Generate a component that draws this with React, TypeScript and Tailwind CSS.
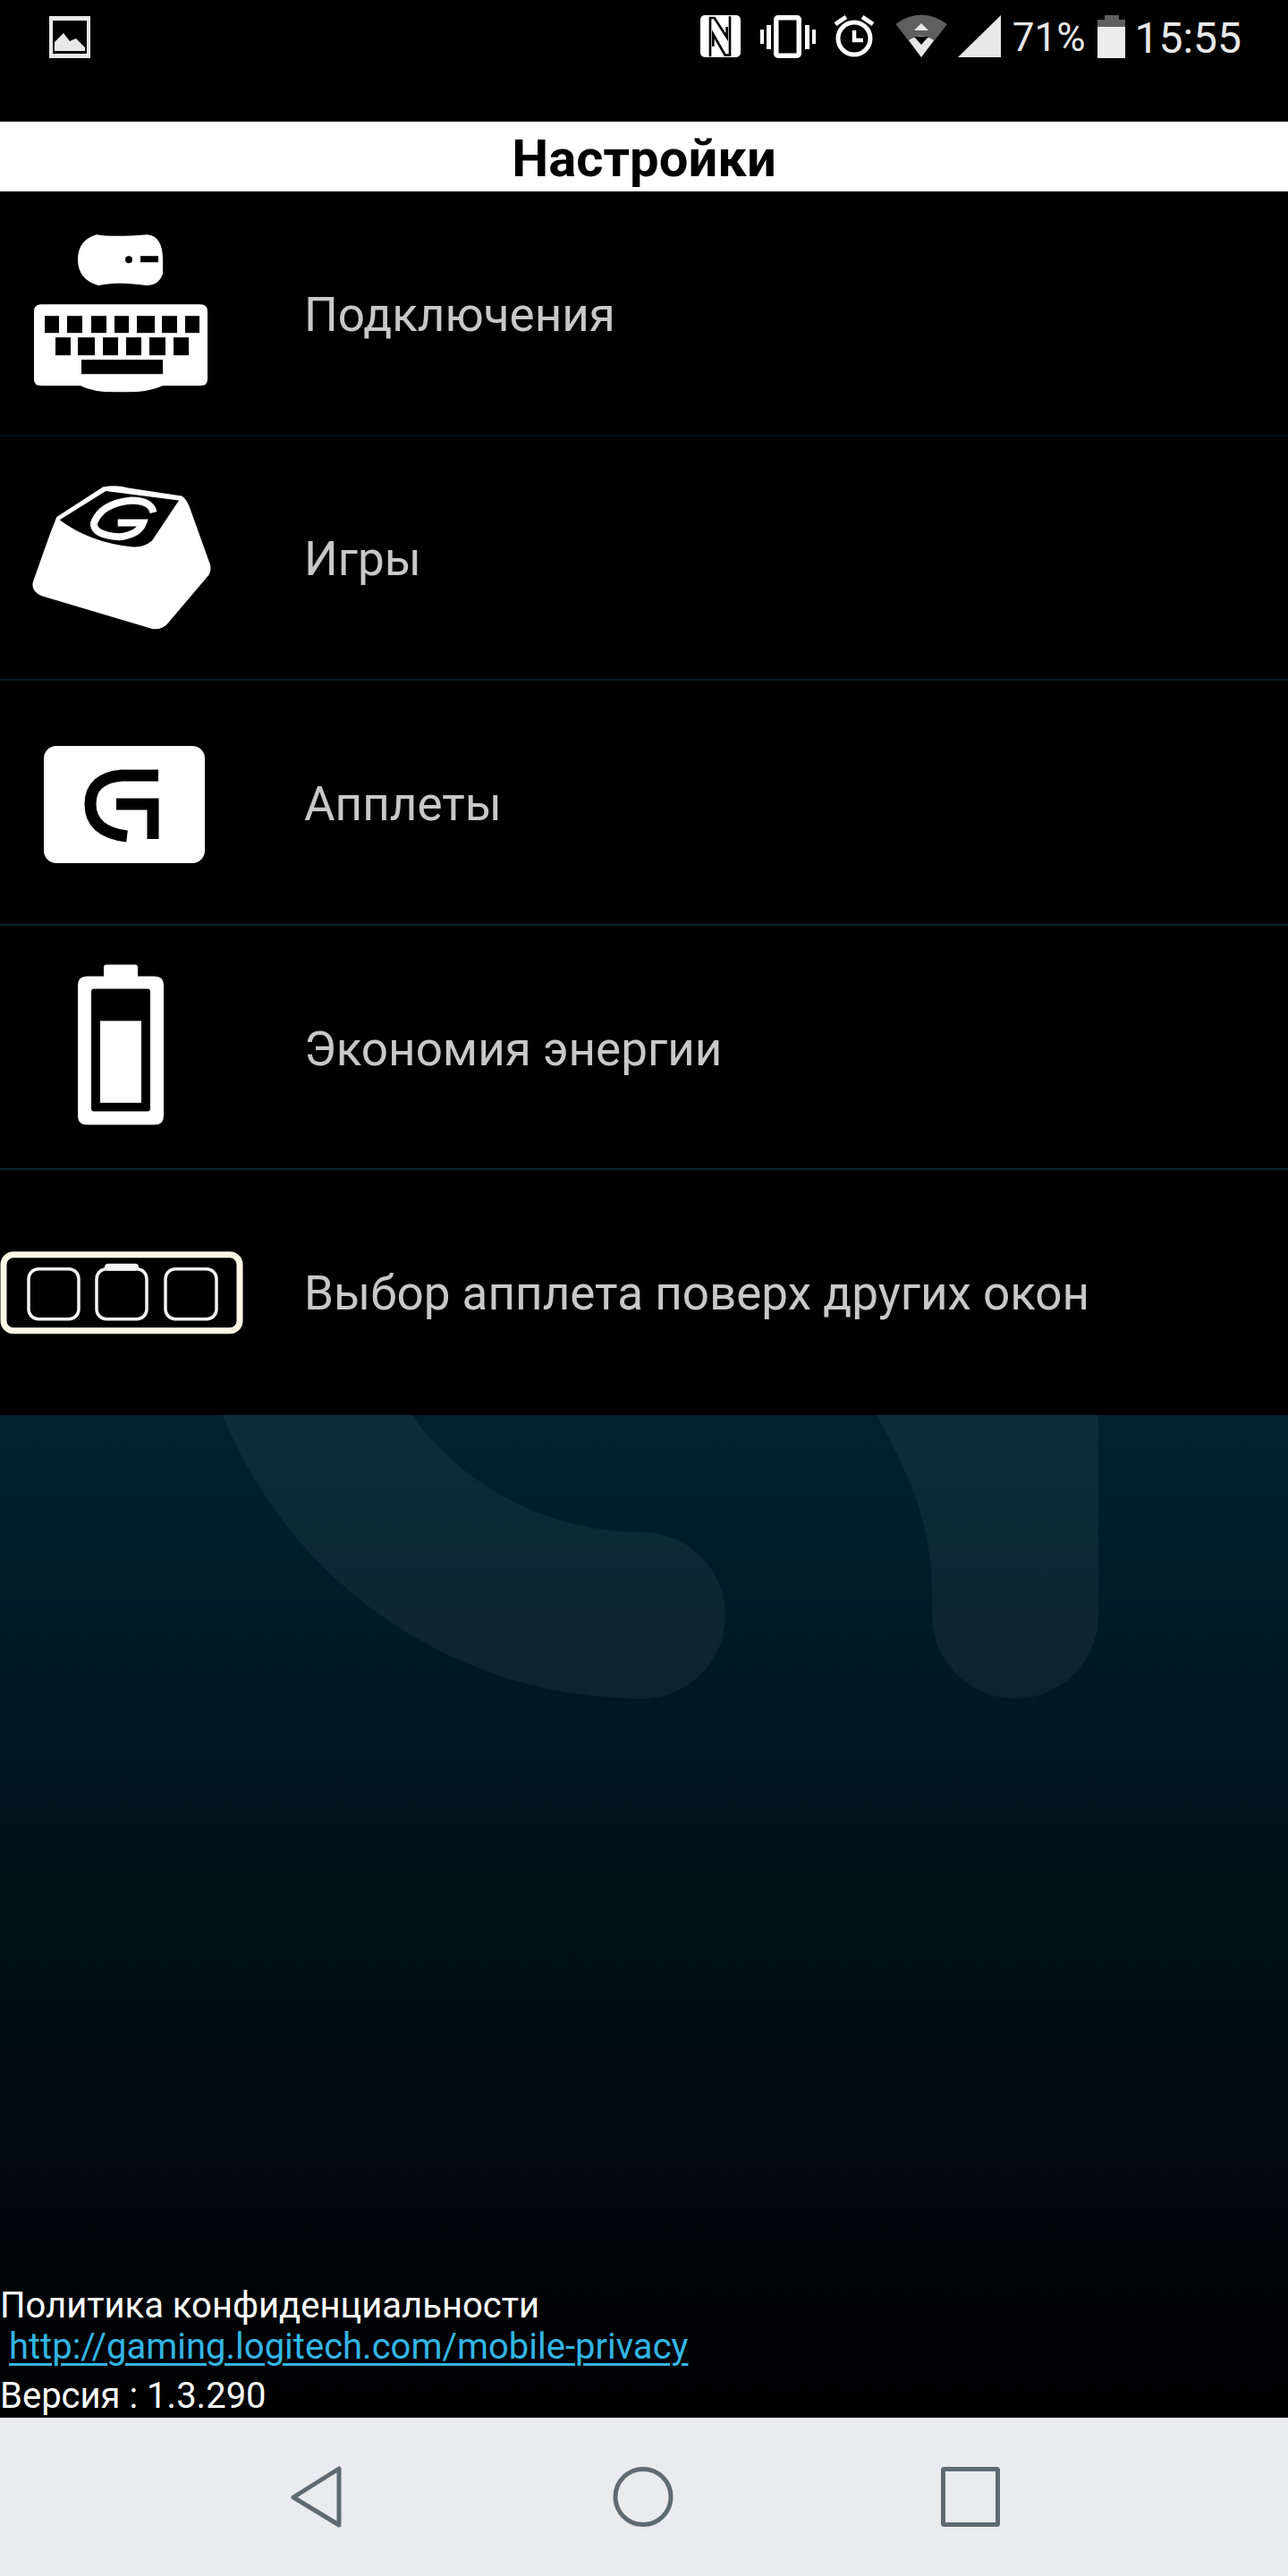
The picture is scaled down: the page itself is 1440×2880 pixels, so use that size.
import React from "react";

const Row = ({ label, border, children }: { label: string; border: string; children: React.ReactNode }) => (
  <div className={`flex h-[273.6px] items-center overflow-hidden border-b-2 ${border}`}>
    <div className="flex w-[340px] shrink-0 items-center">
      <svg viewBox="0 0 272 270" className="h-[270px] w-[272px]">{children}</svg>
    </div>
    <span className="mt-[5px] text-[53px] leading-none text-[#c8c8c8]">{label}</span>
  </div>
);

export default function App() {
  return (
    <div className="flex h-[2880px] w-[1440px] flex-col overflow-hidden bg-black [font-family:Roboto,sans-serif]">
      {/* status bar */}
      <div className="flex h-[136px] shrink-0 items-start justify-between pl-[55px] pr-[52px] pt-[16px]">
        <svg viewBox="55 16 46 50" className="h-[50px] w-[46px]">
          <path fillRule="evenodd" d="M55 18H101V65H55ZM59 23V60H97V23Z" fill="#e8e8e8" />
          <path d="M61 57V47L71 37L78 46L85 43L95 53V57Z" fill="#e8e8e8" />
        </svg>
        <div className="flex h-[50px] items-center text-[#e8e8e8]">
          <svg viewBox="782 16 46 50" className="h-[50px] w-[46px]">
            <rect x="783" y="17" width="45" height="47" rx="5" fill="#fff" />
            <g transform="translate(780,10) scale(0.33333)">
              <path d="M42 160V30H56L98 95V60M108 25V155H92L52 85V125" fill="none" stroke="#000" strokeWidth="8" />
            </g>
          </svg>
          <svg viewBox="850 16 62 50" className="ml-[22px] h-[50px] w-[62px]">
            <rect x="867.75" y="19.75" width="25.5" height="42.5" rx="2" fill="none" stroke="#fff" strokeWidth="5.5" />
            <path d="M850 33h4v16h-4zM857 28h5v27h-5zM900 28h5v27h-5zM908 33h4v16h-4z" fill="#fff" />
          </svg>
          <svg viewBox="932 16 48 50" className="ml-[20px] h-[50px] w-[48px]">
            <circle cx="955" cy="43" r="18" fill="none" stroke="#fff" strokeWidth="5" />
            <path d="M955 34V45H965" fill="none" stroke="#fff" strokeWidth="4.5" />
            <path d="M934 27L946 19M976 27L964 19" fill="none" stroke="#fff" strokeWidth="5" />
          </svg>
          <svg viewBox="1001 16 59 50" className="ml-[21px] h-[50px] w-[59px]">
            <path d="M1001.5 27Q1030 6 1059 27L1030 64Z" fill="#5f5f5f" />
            <path d="M1016 45Q1030 36 1044 45L1030 64Z" fill="#e8e8e8" />
            <path d="M1022 41H1038L1030 50Z" fill="#000" />
            <path d="M1030 26L1022 34H1038Z" fill="#e8e8e8" />
          </svg>
          <svg viewBox="1071 16 48 50" className="ml-[11px] h-[50px] w-[48px]">
            <path d="M1119 17V64H1071Z" fill="#e8e8e8" />
          </svg>
          <span className="ml-[13px] mt-[2px] text-[44px] leading-[50px]">71%</span>
          <svg viewBox="1227 16 31 50" className="ml-[14px] h-[50px] w-[31px]">
            <path d="M1235 17H1251V22H1258V30H1227V22H1235Z" fill="#5f5f5f" />
            <rect x="1227" y="30" width="31" height="35" fill="#ececec" />
          </svg>
          <span className="ml-[10px] mt-[3px] text-[48px] leading-[50px]">15:55</span>
        </div>
      </div>

      {/* title */}
      <div className="flex h-[78px] shrink-0 items-center justify-center bg-white">
        <span className="mt-[3px] text-[58px] font-bold leading-none text-black">Настройки</span>
      </div>

      {/* rows */}
      <div className="shrink-0 bg-black">
        <Row label="Подключения" border="border-[#021014]">
          <g transform="translate(0,-214.8)">
            <path d="M108 262Q125 265 165 262Q182 264 182 290V306Q178 318 165 319Q130 314 110 319Q87 312 87 290Q87 268 108 262Z" fill="#fff" />
            <circle cx="144" cy="290" r="4" fill="#000" />
            <rect x="157" y="286" width="20" height="7" fill="#000" />
            <path d="M46 340H224Q232 340 232 348V424Q232 431 224 431H182Q165 439 135 438Q105 439 90 431H46Q38 431 38 424V348Q38 340 46 340Z" fill="#fff" />
            <g fill="#000">
              <rect x="50" y="353" width="16" height="19" />
              <rect x="75" y="353" width="17" height="19" />
              <rect x="102" y="353" width="17" height="19" />
              <rect x="128" y="353" width="16" height="19" />
              <rect x="153" y="353" width="20" height="19" />
              <rect x="181" y="353" width="17" height="19" />
              <rect x="207" y="353" width="16" height="19" />
              <rect x="62" y="377" width="17" height="20" />
              <rect x="87" y="377" width="19" height="20" />
              <rect x="115" y="377" width="17" height="20" />
              <rect x="141" y="377" width="17" height="20" />
              <rect x="167" y="377" width="18" height="20" />
              <rect x="194" y="377" width="17" height="20" />
              <rect x="91" y="402" width="91" height="16" />
            </g>
          </g>
        </Row>
        <Row label="Игры" border="border-[#041a22]">
          <g transform="translate(0,-258.4) scale(0.33333)">
            <path d="M190 1045L345 945Q390 935 430 948L610 975Q625 985 635 1010L705 1205Q710 1225 700 1240L560 1405Q540 1425 510 1420L140 1310Q105 1295 110 1265L165 1110Z" fill="#fff" />
            <path d="M200 1055L355 958L600 990L510 1125Q480 1150 440 1145Q300 1130 200 1055Z" fill="#000" />
            <path d="M515 1030Q505 990 440 990Q340 1000 315 1065Q310 1105 400 1112Q465 1105 480 1065H395" fill="none" stroke="#fff" strokeWidth="24" />
          </g>
        </Row>
        <Row label="Апплеты" border="border-[#07242c]">
          <g transform="translate(0,-762)">
            <rect x="49" y="834" width="180" height="131" rx="14" fill="#fff" />
            <path d="M177 867H136Q101 870 101 899Q101 930 142 935" fill="none" stroke="#000" strokeWidth="13" />
            <path d="M130 899H171V938" fill="none" stroke="#000" strokeWidth="13" />
          </g>
        </Row>
        <Row label="Экономия энергии" border="border-[#07242c]">
          <g transform="translate(0,-1035.6)">
            <path fillRule="evenodd" d="M116 1081Q116 1078 119 1078H151Q154 1078 154 1081V1091H173Q183 1091 183 1101V1247Q183 1257 173 1257H97Q87 1257 87 1247V1101Q87 1091 97 1091H116ZM105 1105Q102 1105 102 1108V1239Q102 1242 105 1242H165Q168 1242 168 1239V1108Q168 1105 165 1105Z" fill="#fff" />
            <rect x="112" y="1141" width="46" height="91.5" fill="#fff" />
          </g>
        </Row>
        <Row label="Выбор апплета поверх других окон" border="border-transparent">
          <g transform="translate(0,-1309.2)">
            <rect x="4" y="1403" width="264" height="85" rx="11" fill="none" stroke="#fdf8e6" strokeWidth="7" />
            <g fill="none" stroke="#f4f4f4" strokeWidth="3.5">
              <rect x="32" y="1419" width="56" height="56" rx="11" />
              <rect x="108" y="1419" width="56" height="56" rx="11" />
              <rect x="185" y="1419" width="57" height="56" rx="11" />
            </g>
            <rect x="117" y="1413" width="38" height="8" rx="4" fill="#f4f4f4" />
          </g>
        </Row>
      </div>

      {/* background panel */}
      <div className="relative flex flex-1 flex-col justify-end overflow-hidden bg-[linear-gradient(180deg,#00222e,#000000)] pb-[1px]">
        <svg viewBox="0 1582 1440 317" className="absolute left-0 top-0 h-[317px] w-[1440px]">
          <path d="M249 1582A505 505 0 0 0 718 1899A93 93 0 0 0 718 1713A319 319 0 0 1 460 1582Z" fill="#ffffff" fillOpacity="0.05" />
          <path d="M1228 1582V1806A93 93 0 0 1 1042 1806V1780C1042 1700 1012 1640 980 1582Z" fill="#ffffff" fillOpacity="0.05" />
        </svg>
        <div className="relative text-[40px] text-white">
          <p className="h-[46px] leading-[46px]">Политика конфиденциальности</p>
          <a className="block h-[55px] pl-[10px] leading-[46px] text-[#33b5e5] underline decoration-[3px] underline-offset-[5px]">http://gaming.logitech.com/mobile-privacy</a>
          <p className="h-[46px] leading-[46px]">Версия : 1.3.290</p>
        </div>
      </div>

      {/* nav bar */}
      <div className="flex h-[177px] shrink-0 items-start bg-[#e9ebef] pt-[53px]">
        <svg viewBox="0 2756 1440 72" className="h-[72px] w-[1440px]">
          <g fill="none" stroke="#5f6b73" strokeWidth="5" strokeLinejoin="round">
            <path d="M379 2760V2823L328 2792Z" />
            <circle cx="719" cy="2791.5" r="31" />
            <rect x="1054.5" y="2760.5" width="61" height="62" rx="1" />
          </g>
        </svg>
      </div>
    </div>
  );
}
